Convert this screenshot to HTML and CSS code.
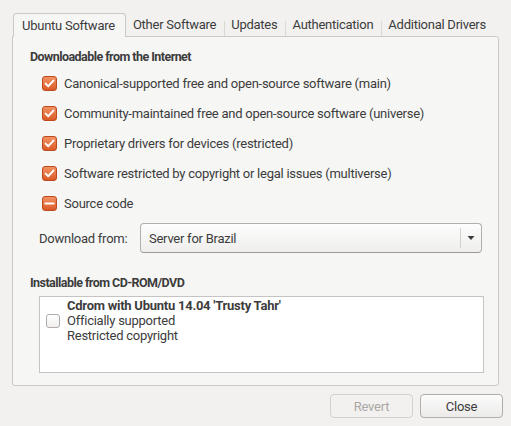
FILE: index.html
```html
<!DOCTYPE html>
<html>
<head>
<meta charset="utf-8">
<link rel="stylesheet" href="styles.css">
</head>
<body>
<div class="dialog">
  <div class="notebook">
    <div class="tabs">
      <div class="tab active">Ubuntu Software</div>
      <div class="tab">Other Software</div>
      <div class="tab sep">Updates</div>
      <div class="tab sep">Authentication</div>
      <div class="tab sep">Additional Drivers</div>
    </div>
    <div class="panel">
      <div class="heading">Downloadable from the Internet</div>
      <div class="checks">
        <div class="check-row"><span class="cb checked"><svg viewBox="0 0 15 15" width="15" height="15"><path d="M3.6 7.6 L6.3 10.2 L11.4 4.6" fill="none" stroke="#fff" stroke-width="2" stroke-linecap="round" stroke-linejoin="round"/></svg></span><span>Canonical-supported free and open-source software (main)</span></div>
        <div class="check-row"><span class="cb checked"><svg viewBox="0 0 15 15" width="15" height="15"><path d="M3.6 7.6 L6.3 10.2 L11.4 4.6" fill="none" stroke="#fff" stroke-width="2" stroke-linecap="round" stroke-linejoin="round"/></svg></span><span>Community-maintained free and open-source software (universe)</span></div>
        <div class="check-row"><span class="cb checked"><svg viewBox="0 0 15 15" width="15" height="15"><path d="M3.6 7.6 L6.3 10.2 L11.4 4.6" fill="none" stroke="#fff" stroke-width="2" stroke-linecap="round" stroke-linejoin="round"/></svg></span><span>Proprietary drivers for devices (restricted)</span></div>
        <div class="check-row"><span class="cb checked"><svg viewBox="0 0 15 15" width="15" height="15"><path d="M3.6 7.6 L6.3 10.2 L11.4 4.6" fill="none" stroke="#fff" stroke-width="2" stroke-linecap="round" stroke-linejoin="round"/></svg></span><span>Software restricted by copyright or legal issues (multiverse)</span></div>
        <div class="check-row"><span class="cb checked"><svg viewBox="0 0 15 15" width="15" height="15"><path d="M3.5 7.5 L11.5 7.5" fill="none" stroke="#fff" stroke-width="2.2" stroke-linecap="round"/></svg></span><span>Source code</span></div>
      </div>
      <div class="download-row">
        <span class="dl-label">Download from:</span>
        <div class="combo">
          <span class="combo-text">Server for Brazil</span>
          <span class="combo-sep"></span>
          <span class="combo-arrow"><svg viewBox="0 0 8 6" width="8" height="6"><path d="M0.5 1 L7.5 1 L4 5 Z" fill="#3c3c3c"/></svg></span>
        </div>
      </div>
      <div class="heading heading2">Installable from CD-ROM/DVD</div>
      <div class="listbox">
        <div class="list-item">
          <span class="cb empty"></span>
          <div class="item-text">
            <div class="bold">Cdrom with Ubuntu 14.04 'Trusty Tahr'</div>
            <div>Officially supported</div>
            <div>Restricted copyright</div>
          </div>
        </div>
      </div>
    </div>
  </div>
  <div class="buttons">
    <button class="btn disabled">Revert</button>
    <button class="btn">Close</button>
  </div>
</div>
</body>
</html>
```
FILE: styles.css
```css
html, body {
  margin: 0;
  padding: 0;
  background: #f2f1f0;
}
body {
  font-family: Roboto, "Liberation Sans", sans-serif;
  font-size: 13px;
  letter-spacing: -0.25px;
  color: #3c3c3c;
  width: 511px;
  height: 426px;
  overflow: hidden;
}
.dialog {
  padding: 13px 12px 0 12px;
}
.tabs {
  display: flex;
  align-items: flex-end;
  padding-left: 1px;
  height: 23px;
  white-space: nowrap;
}
.tab {
  height: 23px;
  line-height: 23px;
  padding: 0 8px 0 7px;
  box-sizing: border-box;
  position: relative;
  white-space: nowrap;
}
.tab.sep::before {
  content: "";
  position: absolute;
  left: 0;
  top: 8px;
  bottom: 0;
  width: 1px;
  background: #dad8d6;
}
.tab.active {
  padding: 0 10px 0 8px;
  background: #f6f6f5;
  border: 1px solid #cbc9c7;
  border-bottom: none;
  border-radius: 4px 4px 0 0;
  line-height: 24px;
  margin-bottom: -1px;
  height: 24px;
  z-index: 1;
}
.panel {
  background: #f6f6f5;
  border: 1px solid #cbc9c7;
  border-radius: 0 3px 3px 3px;
  height: 350px;
  box-sizing: border-box;
  padding: 11px 14px 0 17px;
}
.heading {
  font-weight: bold;
  line-height: 18px;
  font-size: 12.5px;
  letter-spacing: -0.55px;
}
.checks {
  margin-top: 2px;
  padding-left: 12px;
}
.check-row {
  display: flex;
  align-items: center;
  height: 30px;
}
.cb {
  width: 15px;
  height: 15px;
  box-sizing: border-box;
  border-radius: 3px;
  margin-right: 7px;
  flex: none;
  display: block;
}
.cb svg {
  display: block;
  margin: -1px;
}
.cb.checked {
  background: linear-gradient(#f29263, #db5a26);
  border: 1px solid #bd4a1e;
}
.cb.empty {
  background: linear-gradient(#ffffff, #f0efee);
  border: 1px solid #aeaba8;
  width: 14px;
  height: 14px;
}
.download-row {
  display: flex;
  align-items: center;
  margin-top: 5px;
  padding-left: 9px;
}
.dl-label {
  width: 101px;
  flex: none;
}
.combo {
  flex: 1;
  height: 30px;
  box-sizing: border-box;
  border: 1px solid #b2afac;
  border-bottom-color: #9c9996;
  border-radius: 4px;
  background: linear-gradient(#fdfdfd, #efeeed);
  display: flex;
  align-items: center;
  margin-right: 2px;
}
.combo-text {
  flex: 1;
  padding-left: 8px;
}
.combo-sep {
  width: 1px;
  height: 20px;
  background: #d3d1cf;
}
.combo-arrow {
  width: 20px;
  display: flex;
  justify-content: center;
}
.combo-arrow svg {
  display: block;
}
.heading2 {
  margin-top: 21px;
}
.listbox {
  margin: 4px 0 0 9px;
  height: 77px;
  box-sizing: border-box;
  background: #ffffff;
  border: 1px solid #c6c4c2;
}
.list-item {
  display: flex;
  align-items: center;
  padding: 1px 0 0 6px;
}
.list-item .cb {
  margin-right: 7px;
}
.item-text {
  line-height: 15px;
}
.bold {
  font-weight: bold;
  letter-spacing: -0.25px;
}
.buttons {
  display: flex;
  justify-content: flex-end;
  gap: 7px;
  margin-top: 8px;
  margin-right: -4px;
}
.btn {
  font-family: inherit;
  font-size: 13px;
  letter-spacing: -0.25px;
  color: #3c3c3c;
  height: 24px;
  width: 83px;
  border: 1px solid #b0adaa;
  border-radius: 4px;
  background: linear-gradient(#fbfbfb, #ecebea);
  padding: 0;
}
.btn.disabled {
  color: #aaa7a4;
  border-color: #d3d1cf;
  background: #f2f1f0;
}
```
